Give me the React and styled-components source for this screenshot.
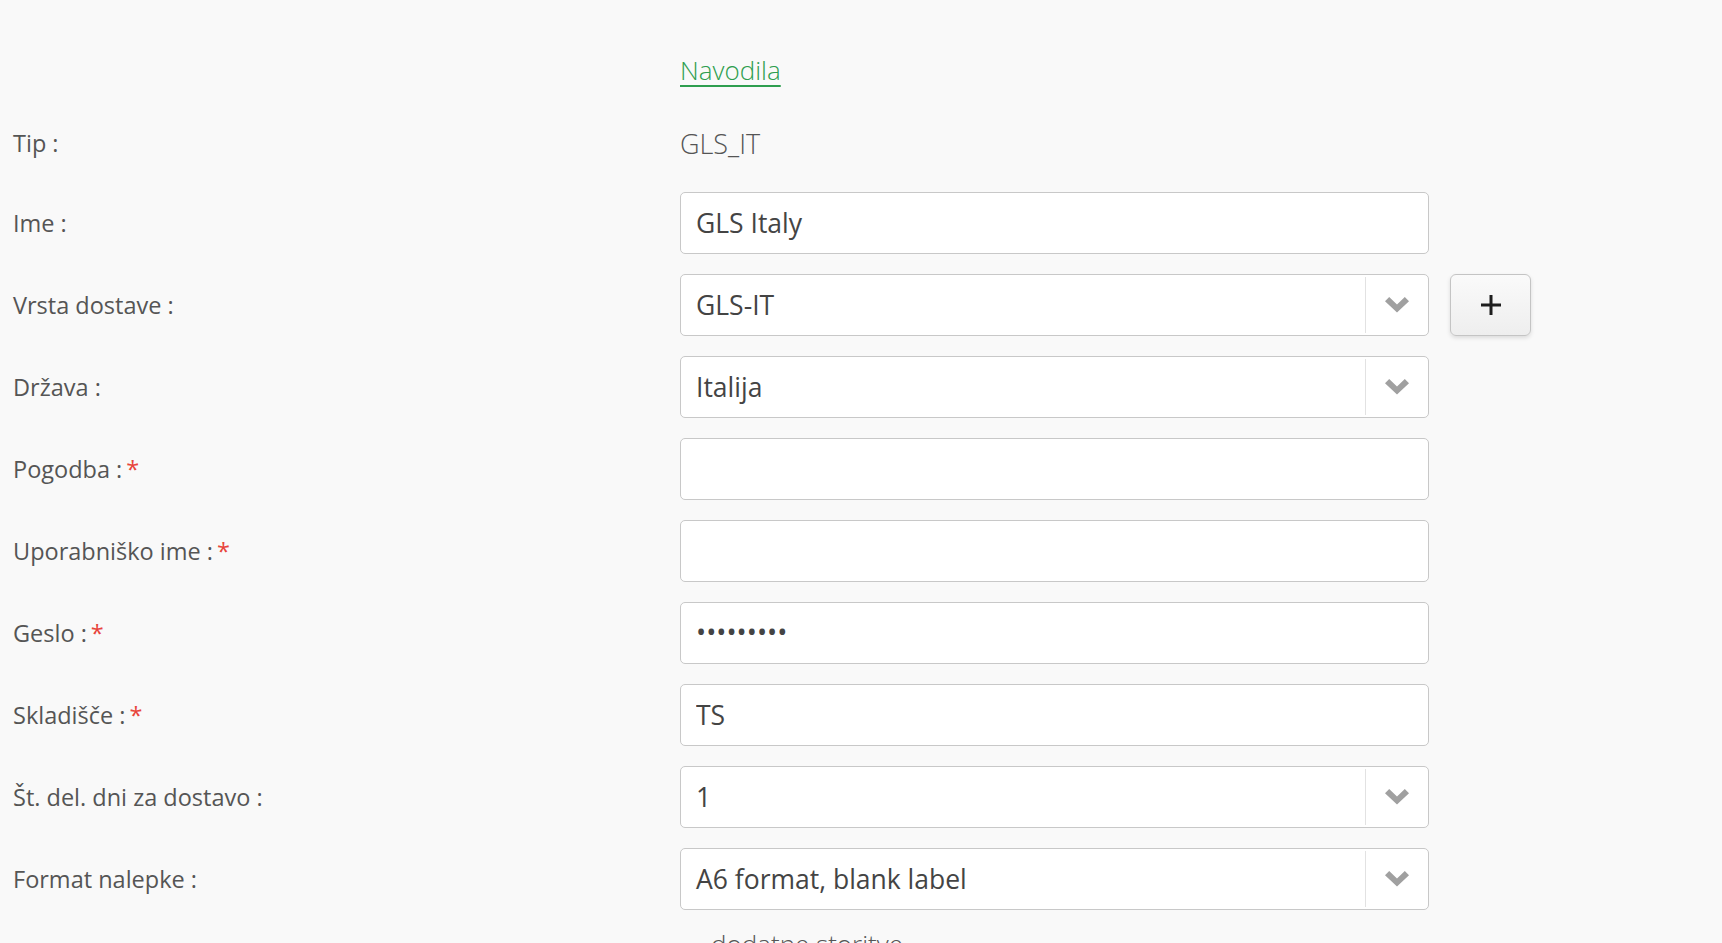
import React from "react";
import styled, { createGlobalStyle } from "styled-components";

const Global = createGlobalStyle`
  html, body { margin: 0; padding: 0; background: #f9f9f9; }
  body { font-family: "Open Sans", "Liberation Sans", sans-serif; color: #555; }
  * { box-sizing: border-box; }
`;

const Page = styled.div`
  padding: 46px 0 0 13px;
  display: flex;
  flex-direction: column;
  gap: 20px;
`;

const Row = styled.div`
  display: grid;
  grid-template-columns: 646px 749px auto;
  column-gap: 21px;
  align-items: center;
  height: ${(p) => p.$h || 62}px;
`;

const Label = styled.div`
  font-size: 23.5px;
  color: #555;
  white-space: nowrap;
`;

const Req = styled.span`
  color: #e8453c;
  margin-left: 4px;
`;

const Link = styled.a`
  font-size: 26px;
  font-weight: 300;
  color: #2e9e4f;
  text-decoration: underline;
  text-underline-offset: 5px;
  text-decoration-thickness: 2px;
`;

const StaticValue = styled.div`
  font-size: 27px;
  font-weight: 300;
  color: #555;
`;

const Input = styled.input`
  width: 100%;
  height: 62px;
  border: 1px solid #c8c8c8;
  border-radius: 5px;
  background: #fff;
  padding: 0 15px;
  font-family: inherit;
  font-size: 26.5px;
  color: #444;
  outline: none;
  &[type="password"] { font-size: 27px; padding-bottom: 4px; }
`;

const Select = styled.div`
  width: 100%;
  height: 62px;
  border: 1px solid #c8c8c8;
  border-radius: 5px;
  background: #fff;
  display: flex;
  align-items: stretch;
`;

const SelectValue = styled.div`
  flex: 1;
  display: flex;
  align-items: center;
  padding: 0 15px;
  font-size: 26.5px;
  color: #444;
`;

const Caret = styled.div`
  width: 63px;
  border-left: 1px solid #e2e2e2;
  display: flex;
  align-items: center;
  justify-content: center;
  margin: 2px 0;
`;

const AddButton = styled.button`
  width: 81px;
  height: 62px;
  border: 1px solid #c4c4c4;
  border-radius: 6px;
  background: linear-gradient(#fafafa, #eeeeee);
  box-shadow: 0 2px 4px rgba(0, 0, 0, 0.12);
  display: flex;
  align-items: center;
  justify-content: center;
  padding: 0;
`;

const Extra = styled.div`
  grid-column: 2;
  align-self: start;
  margin-top: -3px;
  padding-left: 31px;
  font-size: 26px;
  line-height: 1.36;
  font-weight: 300;
  color: #555;
`;

const Chevron = () => (
  <svg width="24" height="16" viewBox="0 0 24 16">
    <path d="M0 4.2 L4.2 0 L12 7.6 L19.8 0 L24 4.2 L12 15.5 Z" fill="#a0a0a0" />
  </svg>
);

const Plus = () => (
  <svg width="22" height="22" viewBox="0 0 22 22">
    <path d="M11 1 V21 M1 11 H21" stroke="#1e1e1e" strokeWidth="3" />
  </svg>
);

const Dropdown = ({ value }) => (
  <Select>
    <SelectValue>{value}</SelectValue>
    <Caret>
      <Chevron />
    </Caret>
  </Select>
);

const Field = ({ label, required, children, extra }) => (
  <Row>
    <Label>
      {label} :{required && <Req>*</Req>}
    </Label>
    {children}
    {extra}
  </Row>
);

export default function App() {
  return (
    <>
      <Global />
      <Page>
        <Row $h={48}>
          <span />
          <div>
            <Link href="#">Navodila</Link>
          </div>
        </Row>
        <Row $h={58}>
          <Label>Tip :</Label>
          <StaticValue>GLS_IT</StaticValue>
        </Row>
        <Field label="Ime">
          <Input readOnly value="GLS Italy" />
        </Field>
        <Field
          label="Vrsta dostave"
          extra={
            <AddButton>
              <Plus />
            </AddButton>
          }
        >
          <Dropdown value="GLS-IT" />
        </Field>
        <Field label="Država">
          <Dropdown value="Italija" />
        </Field>
        <Field label="Pogodba" required>
          <Input readOnly value="" />
        </Field>
        <Field label="Uporabniško ime" required>
          <Input readOnly value="" />
        </Field>
        <Field label="Geslo" required>
          <Input type="password" readOnly value="123456789" />
        </Field>
        <Field label="Skladišče" required>
          <Input readOnly value="TS" />
        </Field>
        <Field label="Št. del. dni za dostavo">
          <Dropdown value="1" />
        </Field>
        <Field label="Format nalepke">
          <Dropdown value="A6 format, blank label" />
        </Field>
        <Row $h={34}>
          <Extra>dodatne storitve</Extra>
        </Row>
      </Page>
    </>
  );
}
